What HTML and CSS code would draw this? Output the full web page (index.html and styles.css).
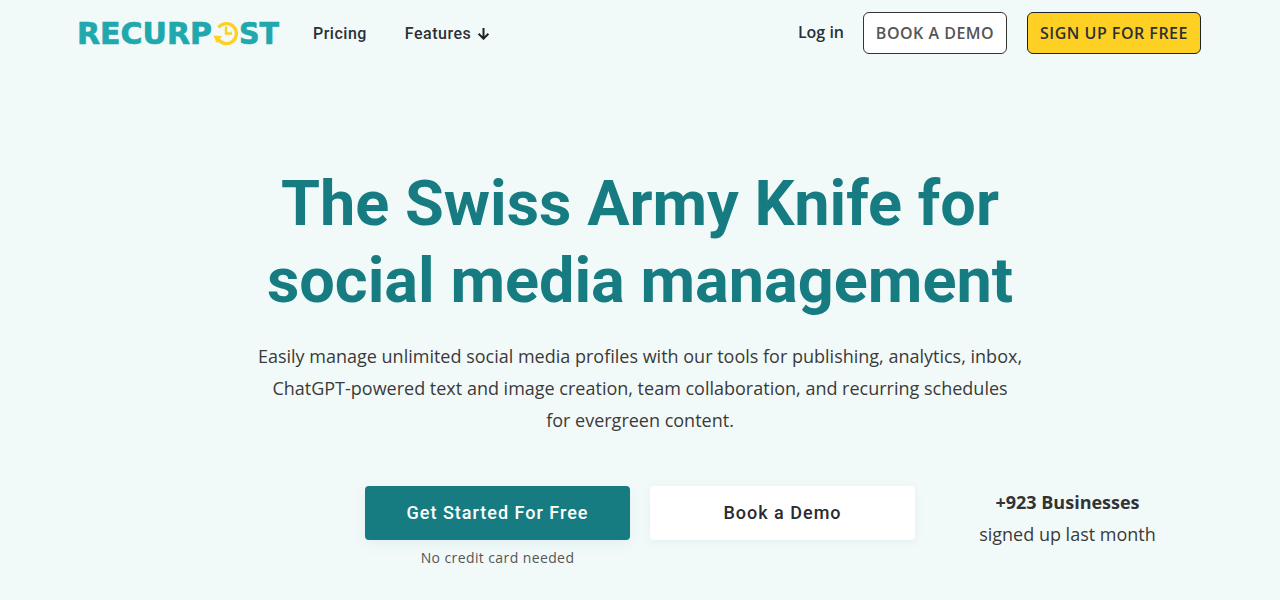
FILE: index.html
```html
<!DOCTYPE html>
<html lang="en">
<head>
<meta charset="utf-8">
<title>RecurPost</title>
<link rel="stylesheet" href="styles.css">
</head>
<body>
<header class="nav">
  <div class="nav-left">
    <svg class="logo" width="201" height="26" viewBox="0 0 201 26" role="img" aria-label="RecurPost">
      <text class="logo-text" x="-2" y="24" textLength="135" lengthAdjust="spacingAndGlyphs">RECURP</text>
      <path class="clock-ring" d="M139.5 7.5A10 10 0 1 1 139 19"/>
      <path class="clock-hand" d="M147 6.5v7h6"/>
      <path class="clock-arrow" d="M134.5 15.5l8.5 .5-5.5 7z"/>
      <text class="logo-text" x="160" y="24" textLength="40" lengthAdjust="spacingAndGlyphs">ST</text>
    </svg>
    <nav class="links">
      <a class="link">Pricing</a>
      <a class="link">Features
        <svg class="arrow" width="13" height="13" viewBox="0 0 13 13"><path d="M6.5 1v10.5M1.6 6.8l4.9 4.9 4.9-4.9"/></svg>
      </a>
    </nav>
  </div>
  <div class="nav-right">
    <a class="login">Log in</a>
    <a class="btn-nav btn-demo">BOOK A DEMO</a>
    <a class="btn-nav btn-signup">SIGN UP FOR FREE</a>
  </div>
</header>
<main class="hero">
  <h1 class="title">The Swiss Army Knife for<br>social media management</h1>
  <p class="lead">Easily manage unlimited social media profiles with our tools for publishing, analytics, inbox,<br>ChatGPT-powered text and image creation, team collaboration, and recurring schedules<br>for evergreen content.</p>
  <div class="cta">
    <div class="cta-col">
      <a class="btn-big btn-primary">Get Started For Free</a>
      <span class="note">No credit card needed</span>
    </div>
    <a class="btn-big btn-white">Book a Demo</a>
    <div class="proof">
      <strong class="proof-num">+923 Businesses</strong>
      <span>signed up last month</span>
    </div>
  </div>
</main>
</body>
</html>
```
FILE: styles.css
```css
* { box-sizing: border-box; }
html, body { margin: 0; height: 600px; overflow: hidden; }
body { background: #f2faf9; font-family: "Open Sans", sans-serif; color: #333; }
.nav { display: flex; justify-content: space-between; align-items: center; height: 66px; padding: 0 79px; }
.nav-left { display: flex; align-items: center; }
.logo { display: block; margin-right: 33px; overflow: visible; }
.logo-text { font-family: "DejaVu Sans", sans-serif; font-weight: 700; font-size: 30px; fill: #1fa8ad; stroke: #1fa8ad; stroke-width: .7px; }
.clock-ring { fill: none; stroke: #ffd024; stroke-width: 3.4; }
.clock-hand { fill: none; stroke: #ffd024; stroke-width: 2.4; }
.clock-arrow { fill: #ffd024; }
.links { display: flex; gap: 38px; }
.link { font-family: Roboto, sans-serif; font-weight: 500; font-size: 16px; letter-spacing: .5px; color: #2a3036; display: flex; align-items: center; gap: 6px; }
.arrow { fill: none; stroke: #1c2228; stroke-width: 2; }
.nav-right { display: flex; align-items: center; }
.login { font-size: 16px; font-weight: 600; color: #2a3036; margin-right: 19px; margin-top: -2px; }
.btn-nav { display: flex; align-items: center; justify-content: center; height: 42px; border-radius: 6px; border: 1px solid #333; font-size: 16px; font-weight: 600; letter-spacing: .5px; }
.btn-demo { width: 144px; background: #fff; color: #555; margin-right: 20px; }
.btn-signup { width: 174px; background: #ffd024; color: #2a3036; border-color: #1c2228; }
.hero { display: flex; flex-direction: column; align-items: center; padding-top: 99px; }
.title { margin: 0; font-family: Roboto, sans-serif; font-weight: 700; font-size: 63px; line-height: 77px; color: #177c82; text-align: center; }
.lead { margin: 21px 0 0; font-size: 18px; line-height: 32px; text-align: center; color: #3a3a3a; }
.cta { display: flex; align-items: flex-start; gap: 20px; margin-top: 50px; margin-left: 285px; }
.cta-col { display: flex; flex-direction: column; align-items: center; gap: 8px; }
.btn-big { display: flex; align-items: center; justify-content: center; width: 265px; height: 54px; padding-bottom: 1px; border-radius: 4px; font-family: Roboto, sans-serif; font-weight: 500; font-size: 18px; letter-spacing: 1px; }
.btn-primary { background: #177c82; color: #fff; box-shadow: 0 4px 14px rgba(23,124,130,.08); }
.btn-white { background: #fff; color: #2a2a30; box-shadow: 0 2px 10px rgba(23,124,130,.08); }
.note { font-size: 14px; letter-spacing: .4px; color: #555; }
.proof { display: flex; flex-direction: column; align-items: center; width: 265px; font-size: 18px; line-height: 32px; color: #3a3a3a; }
.proof-num { font-weight: 700; color: #333; }
```
